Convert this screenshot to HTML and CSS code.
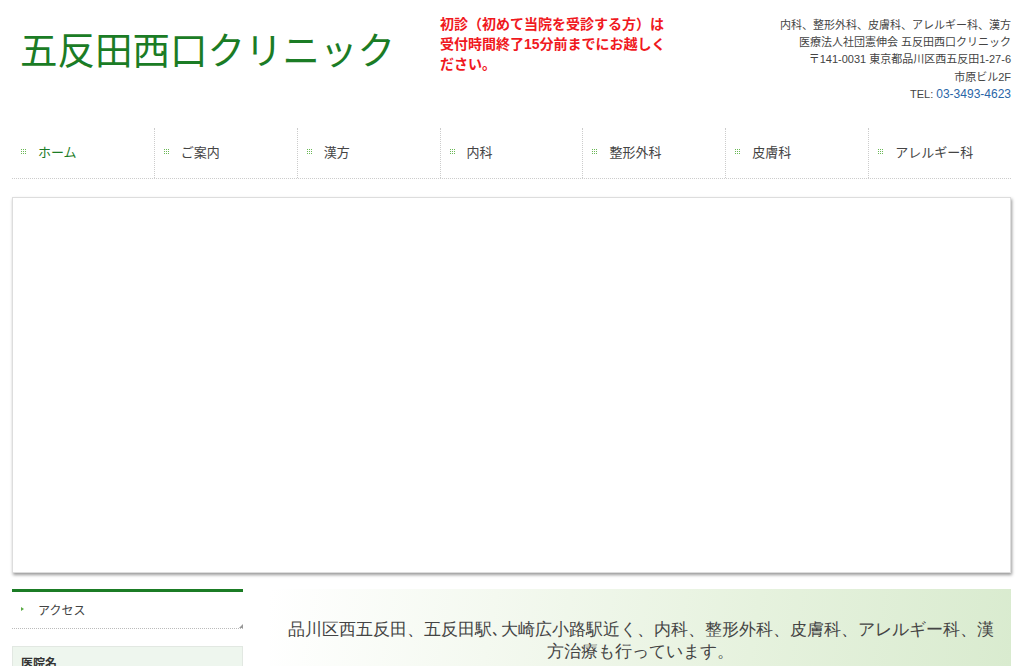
FILE: index.html
```html
<!DOCTYPE html>
<html lang="ja">
<head>
    <meta charset="UTF-8">
    <meta name="viewport" content="width=device-width, initial-scale=1.0">
    <title>五反田西口クリニック</title>
    <link rel="stylesheet" href="styles.css">
</head>
<body>
    <div class="wrapper">
        <header class="header">
            <h1 class="logo">五反田西口クリニック</h1>
            <p class="notice">初診（初めて当院を受診する方）は<br>受付時間終了15分前までにお越しく<br>ださい。</p>
            <div class="info">
                <div>内科、整形外科、皮膚科、アレルギー科、漢方</div>
                <div>医療法人社団憲伸会 五反田西口クリニック</div>
                <div>〒141-0031 東京都品川区西五反田1-27-6</div>
                <div>市原ビル2F</div>
                <div>TEL: <a href="#" class="tel">03-3493-4623</a></div>
            </div>
        </header>

        <nav class="nav">
            <a href="#" class="nav-item active">ホーム</a>
            <a href="#" class="nav-item">ご案内</a>
            <a href="#" class="nav-item">漢方</a>
            <a href="#" class="nav-item">内科</a>
            <a href="#" class="nav-item">整形外科</a>
            <a href="#" class="nav-item">皮膚科</a>
            <a href="#" class="nav-item">アレルギー科</a>
        </nav>

        <div class="slideshow"></div>

        <div class="columns">
            <aside class="sidebar">
                <div class="side-menu">
                    <a href="#" class="side-link">アクセス</a>
                </div>
                <div class="side-box">
                    <h3>医院名</h3>
                </div>
            </aside>
            <main class="main">
                <p class="lead">品川区西五反田、五反田駅､大崎広小路駅近く、内科、整形外科、皮膚科、アレルギー科、漢方治療も行っています。</p>
            </main>
        </div>
    </div>
</body>
</html>
```

FILE: styles.css
```css
body {
    margin: 0;
    background: #fff;
    font-family: "Liberation Sans", "Noto Sans CJK JP", sans-serif;
    color: #333;
}
a {
    text-decoration: none;
}
.wrapper {
    width: 999px;
    margin-left: 12px;
}
.header {
    display: flex;
    height: 128px;
}
.logo {
    margin: 27px 0 0 8px;
    width: 420px;
    font-size: 37.5px;
    line-height: 48px;
    font-weight: normal;
    color: #1b7c25;
}
.notice {
    margin: 14px 0 0 0;
    width: 250px;
    font-size: 14px;
    line-height: 20px;
    font-weight: bold;
    color: #f0191e;
}
.info {
    margin-top: 17px;
    flex: 1;
    text-align: right;
    font-size: 11px;
    line-height: 17.2px;
    color: #444;
}
.tel {
    color: #2a66a8;
    font-size: 12px;
}
.nav {
    display: flex;
    height: 50px;
    border-bottom: 1px dotted #ccc;
}
.nav-item {
    flex: 1;
    display: flex;
    align-items: center;
    padding: 0 0 3px 26px;
    font-size: 13px;
    color: #444;
    border-left: 1px dotted #ccc;
    position: relative;
}
.nav-item:first-child {
    border-left: none;
}
/* 3x3 dot bullet */
.nav-item::before {
    content: "";
    position: absolute;
    left: 9px;
    top: 21px;
    width: 1px;
    height: 1px;
    background: #6ab855;
    box-shadow: 2px 0 #6ab855, 4px 0 #6ab855,
                0 2px #6ab855, 2px 2px #6ab855, 4px 2px #6ab855,
                0 4px #6ab855, 2px 4px #6ab855, 4px 4px #6ab855;
}
.nav-item.active {
    color: #1b7c25;
}
.slideshow {
    margin-top: 18px;
    height: 374px;
    background: #fff;
    border: 1px solid #ddd;
    box-shadow: 1px 2px 3px rgba(0,0,0,0.4);
}
.columns {
    display: flex;
    margin-top: 16px;
    gap: 27px;
}
.sidebar {
    width: 231px;
}
.side-menu {
    border-top: 3px solid #1b7c25;
    border-bottom: 1px dotted #bbb;
    position: relative;
}
.side-menu::after {
    content: "";
    position: absolute;
    right: 0;
    bottom: 0;
    border-left: 4px solid transparent;
    border-bottom: 4px solid #999;
}
.side-link {
    display: block;
    padding: 9px 0 10px 26px;
    font-size: 12px;
    color: #444;
    position: relative;
}
.side-link::before {
    content: "";
    position: absolute;
    left: 9px;
    top: 15px;
    border-left: 3px solid #5aaa44;
    border-top: 2px solid transparent;
    border-bottom: 2px solid transparent;
}
.side-box {
    margin-top: 17px;
    background: #eef6ee;
    border: 1px solid #e2e8e2;
    padding: 7px 8px;
}
.side-box h3 {
    margin: 0;
    font-size: 12px;
    color: #333;
}
.main {
    flex: 1;
    height: 80px;
    background: linear-gradient(100deg, #fff 0%, #f4f9f0 30%, #e6f2de 65%, #d9ebcf 100%);
}
.lead {
    margin: 30px 10px 0;
    text-align: center;
    font-family: "Liberation Serif", serif;
    font-size: 17px;
    line-height: 22px;
    color: #444;
}
```
